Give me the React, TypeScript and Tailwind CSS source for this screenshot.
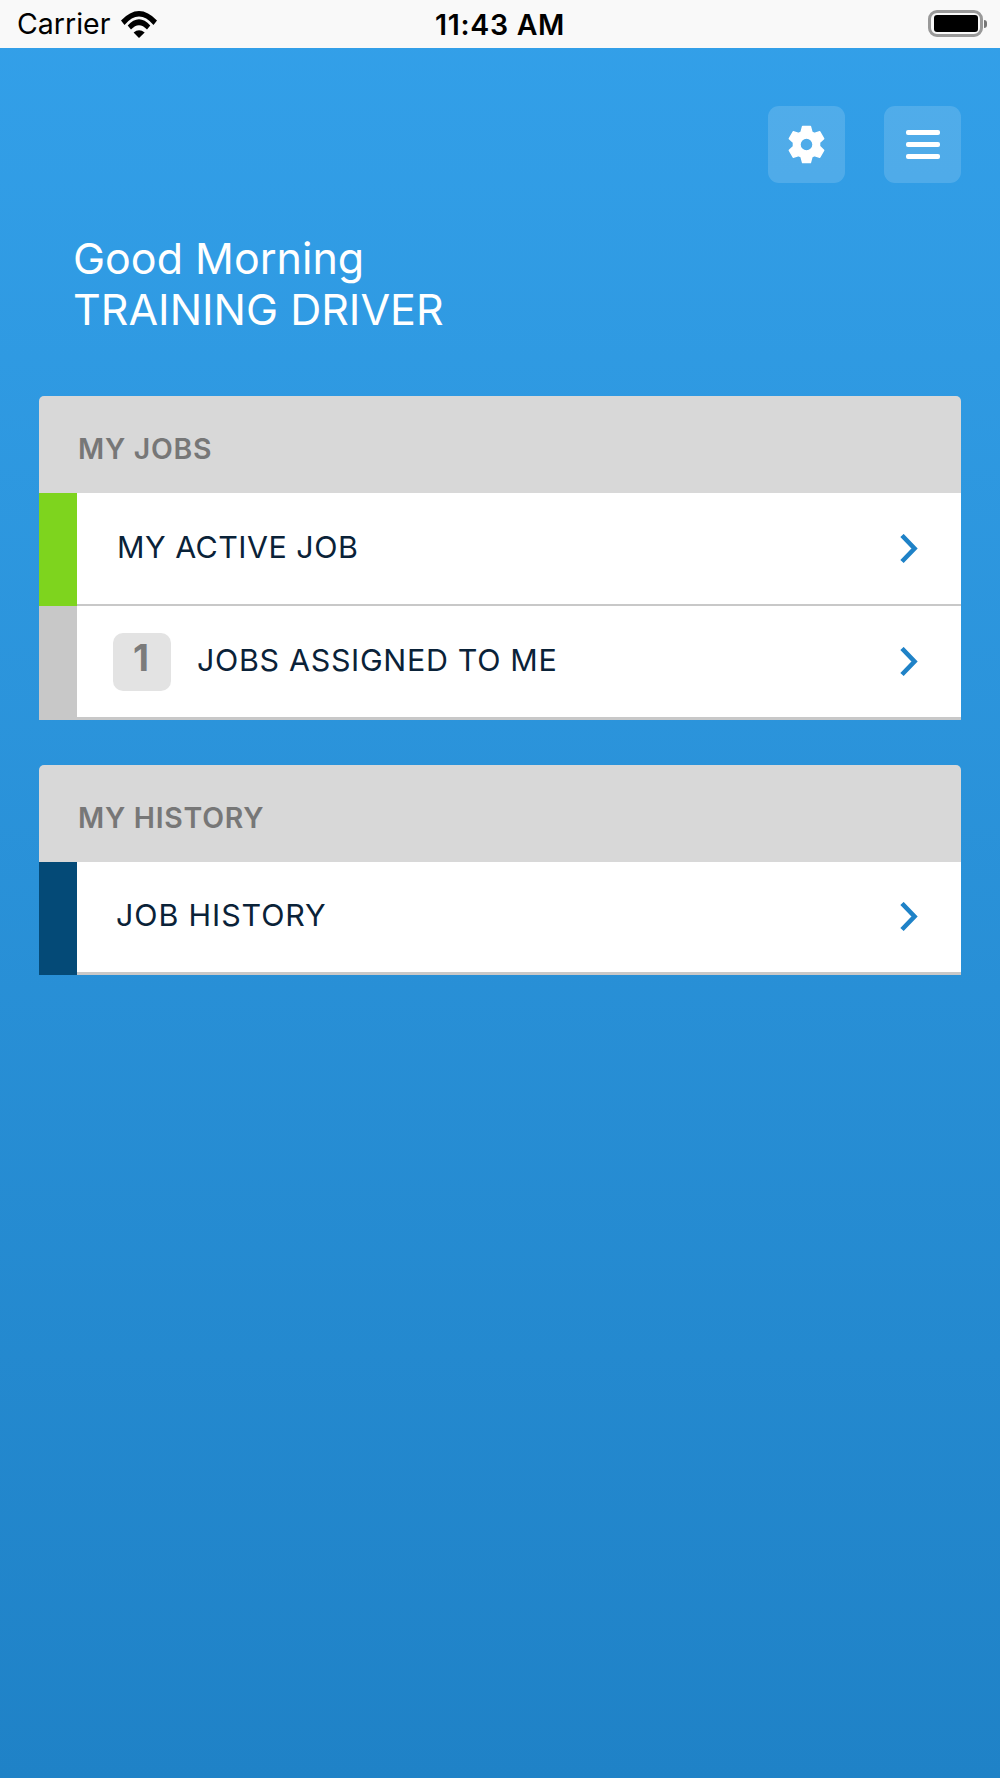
import React from "react";

const Chevron = () => (
  <svg width="20" height="30" viewBox="0 0 20 30" fill="none" className="shrink-0">
    <path d="M3 1.5 L15.5 14.5 L3 27.5" stroke="#1f82c7" strokeWidth="4.6" />
  </svg>
);

const Row = ({ bar, height, border, children }: { bar: string; height: string; border: string; children: React.ReactNode }) => (
  <div className={`flex ${height}`}>
    <div className={`w-[38px] ${bar}`} />
    <div className={`flex flex-1 items-center justify-between bg-white border-[#c8c8c8] pr-[42px] ${border}`}>
      {children}
    </div>
  </div>
);

const Label = ({ children, className }: { children: React.ReactNode; className: string }) => (
  <span className={`pb-[4px] text-[30.4px] leading-[36px] text-[#0a2238] ${className}`}>{children}</span>
);

const Header = ({ children }: { children: React.ReactNode }) => (
  <div className="flex h-[97px] items-center bg-[#d8d8d8] pl-[39px] pt-[10px] text-[28.4px] font-semibold tracking-[0.75px] text-[#777777]">
    {children}
  </div>
);

export default function App() {
  return (
    <div
      className="flex h-[1778px] w-[1000px] flex-col overflow-hidden bg-gradient-to-b from-[#33a0e9] to-[#1f82c7]"
      style={{ fontFamily: 'Inter, "Liberation Sans", sans-serif' }}
    >
      <div className="relative flex h-[48px] items-center bg-[#f9f9f9] pl-[17px] text-black">
        <span className="text-[28.5px] leading-none">Carrier</span>
        <svg width="36" height="27" viewBox="0 0 36 27" className="ml-[11px]">
          <path d="M18 27 L12.6 21.5 Q18 17 23.7 21.5 Z" fill="#000" />
          <path d="M10 18.5 L6.7 14.5 Q18 2 29.3 14.5 L26 18.5 Q18 10 10 18.5 Z" fill="#000" />
          <path d="M3.5 14 L0 9.5 Q18 -9.5 36 9.5 L32.5 14 Q18 -2.8 3.5 14 Z" fill="#000" />
        </svg>
        <span className="absolute left-[435px] top-[11px] text-[28.5px] font-semibold leading-none tracking-[0.7px]">11:43 AM</span>
        <div className="absolute left-[928px] top-[10px] flex items-center">
          <div className="flex h-[27px] w-[55px] items-center justify-center rounded-[9px] border-[3px] border-[#999999]">
            <div className="h-[17px] w-[44px] rounded-[3px] bg-black" />
          </div>
          <div className="ml-[1px] h-[8px] w-[3px] rounded-r-sm bg-[#777777]" />
        </div>
      </div>

      <div className="flex justify-end gap-[39px] pr-[39px] pt-[58px]">
        <div className="flex h-[77px] w-[77px] items-center justify-center rounded-[11px] bg-white/15">
          <svg width="39" height="39" viewBox="0 0 40 40">
            <path
              fillRule="evenodd"
              fill="#fff"
              d="M16 1.5 H24 L25.5 7.2 L28 8.6 L33.6 7 L37.6 14 L33.4 18 V21.9 L37.6 26 L33.6 33 L28 31.4 L25.5 32.8 L24 38.5 H16 L14.5 32.8 L12 31.4 L6.4 33 L2.4 26 L6.6 22 V18 L2.4 14 L6.4 7 L12 8.6 L14.5 7.2 Z M20 13.3 A6.7 6.7 0 1 0 20 26.7 A6.7 6.7 0 1 0 20 13.3 Z"
              stroke="#fff"
              strokeWidth="1.5"
              strokeLinejoin="round"
            />
          </svg>
        </div>
        <div className="flex h-[77px] w-[77px] flex-col items-center justify-center gap-[7px] rounded-[11px] bg-white/15">
          <div className="h-[5px] w-[34px] rounded-[2px] bg-white" />
          <div className="h-[5px] w-[34px] rounded-[2px] bg-white" />
          <div className="h-[5px] w-[34px] rounded-[2px] bg-white" />
        </div>
      </div>

      <div className="mt-[50px] pl-[73px] text-[43px] leading-[51px] text-white">
        <div>Good Morning</div>
        <div>TRAINING DRIVER</div>
      </div>

      <div className="mx-[39px] mt-[61px] flex flex-col gap-[45px]">
        <div className="overflow-hidden rounded-t-[5px]">
          <Header>MY JOBS</Header>
          <Row bar="bg-[#7ed41e]" height="h-[113px]" border="border-b-[2px]">
            <Label className="ml-[40px] tracking-[0.5px]">MY ACTIVE JOB</Label>
            <Chevron />
          </Row>
          <Row bar="bg-[#c8c8c8]" height="h-[114px]" border="border-b-[3px]">
            <div className="flex items-center">
              <div className="ml-[36px] flex h-[58px] w-[58px] items-start justify-center rounded-[10px] bg-[#e3e3e3] pr-[2px] pt-[3px] text-[37px] font-bold leading-[44px] text-[#7b7b7b]">
                1
              </div>
              <Label className="ml-[26px] tracking-[0.7px]">JOBS ASSIGNED TO ME</Label>
            </div>
            <Chevron />
          </Row>
        </div>
        <div className="overflow-hidden rounded-t-[5px]">
          <Header>MY HISTORY</Header>
          <Row bar="bg-[#044a77]" height="h-[113px]" border="border-b-[3px]">
            <Label className="ml-[39px] tracking-[0.9px]">JOB HISTORY</Label>
            <Chevron />
          </Row>
        </div>
      </div>
    </div>
  );
}
